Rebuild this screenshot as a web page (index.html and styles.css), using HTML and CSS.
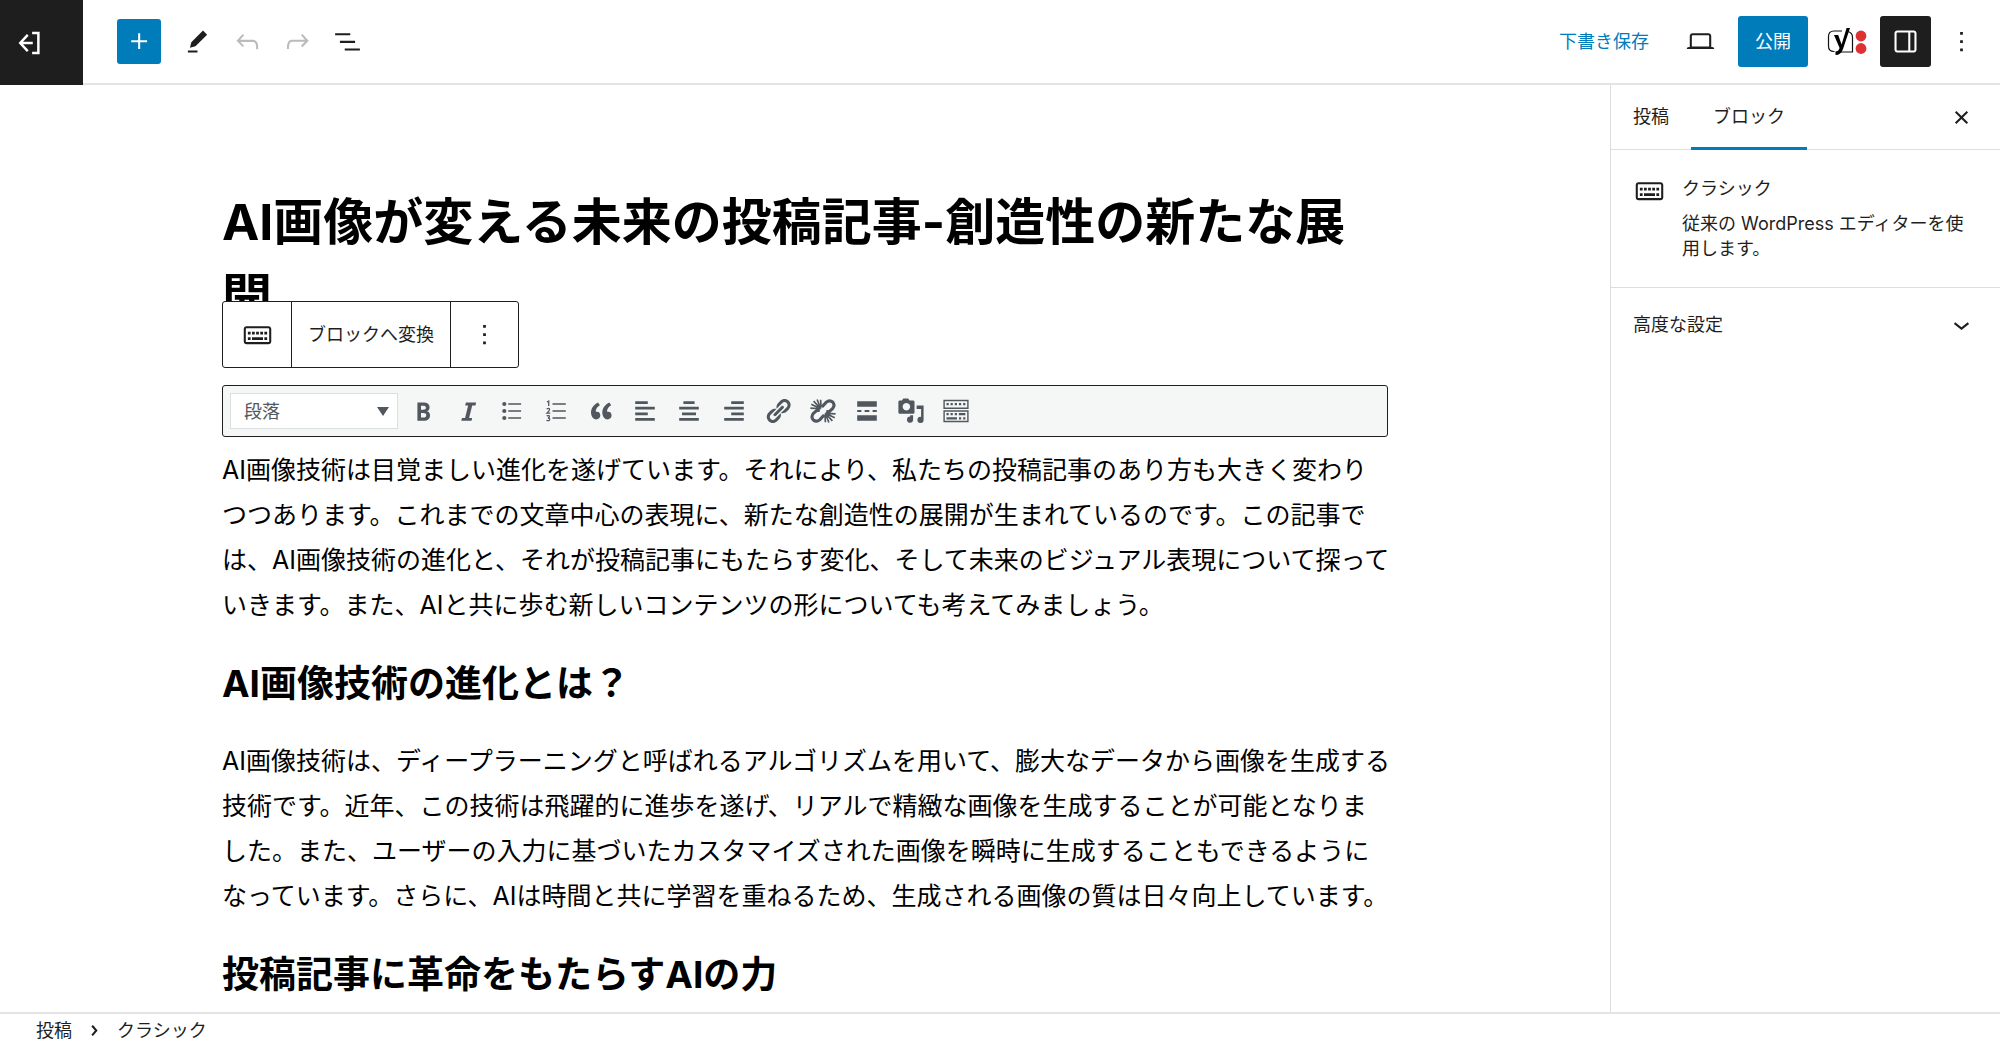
FILE: index.html
```html
<!DOCTYPE html>
<html lang="ja">
<head>
<meta charset="utf-8">
<meta name="viewport" content="width=device-width, initial-scale=1">
<title>投稿を編集</title>
<link rel="stylesheet" href="styles.css">
</head>
<body>
<div class="editor">
  <header class="header">
    <a class="exit" href="#" aria-label="戻る">
      <svg class="icon" viewBox="0 0 24 24" fill="none" stroke="currentColor" stroke-width="2"><path d="M11 5.500 5 12l6 6.500M5.500 12H15M14.500 4h5v16h-5"/></svg>
    </a>
    <div class="header-tools">
      <button class="tool tool-add" type="button" aria-label="ブロック挿入">
        <svg class="icon" viewBox="0 0 24 24"><path d="M11 12.500V17.500H12.500V12.500H17.500V11H12.500V6H11V11H6V12.500Z"/></svg>
      </button>
      <button class="tool" type="button" aria-label="ツール">
        <svg class="icon" viewBox="0 0 24 24"><path d="m19 7-3-3-8.500 8.500-1 4 4-1L19 7Zm-7 11.500H5V20h7v-1.500Z"/></svg>
      </button>
      <button class="tool tool-off" type="button" aria-label="元に戻す">
        <svg class="icon" viewBox="0 0 24 24"><path d="M18.300 11.700c-.6-.6-1.400-.9-2.300-.9H6.700l2.900-3.300-1.100-1-4.500 5L8.500 16l1-1-2.700-2.700H16c.5 0 .9.2 1.300.5 1 1 1 3.400 1 4.500v.3h1.500v-.2c0-1.500 0-4.300-1.500-5.700z"/></svg>
      </button>
      <button class="tool tool-off" type="button" aria-label="やり直す">
        <svg class="icon" viewBox="0 0 24 24"><path d="M15.600 6.500l-1.100 1 2.900 3.300H8c-.9 0-1.700.3-2.300.9-1.400 1.500-1.400 4.200-1.400 5.600v.2h1.500v-.3c0-1.100 0-3.500 1-4.500.3-.3.7-.5 1.300-.5h9.200L14.500 15l1.100 1.100 4.600-4.600-4.600-5z"/></svg>
      </button>
      <button class="tool" type="button" aria-label="ドキュメント概観">
        <svg class="icon" viewBox="0 0 24 24"><path d="M3 6h11v1.500H3V6Zm3.500 5.500h11V13h-11v-1.500ZM21 17H10v1.500h11V17Z"/></svg>
      </button>
    </div>
    <div class="header-settings">
      <button class="save" type="button">下書き保存</button>
      <button class="square" type="button" aria-label="表示">
        <svg class="icon" viewBox="0 0 24 24"><path d="M20.500 16h-.7V8c0-1.100-.9-2-2-2H6.200c-1.100 0-2 .9-2 2v8h-.7c-.8 0-1.500.7-1.500 1.500h20c0-.8-.7-1.500-1.500-1.500zM5.700 8c0-.3.2-.5.5-.5h11.600c.3 0 .5.2.5.5v7.600H5.700V8z"/></svg>
      </button>
      <button class="publish" type="button">公開</button>
      <button class="yoast" type="button" aria-label="Yoast SEO">
        <svg class="yoast-icon" viewBox="0 0 42 30" fill="none">
          <path d="M16 4H8Q2.500 4 2.500 9.500V19Q2.500 24.500 8 24.500H8.500M22 4.500Q26.500 6 26.500 10V25H13.500" stroke="#111" stroke-width="1.200"/>
          <path d="M8 8h4.200l3.400 9.400L20.600 1H24l-7 21Q15 28 9.500 28v-3.400Q12.500 24.500 13.600 21z" fill="#000"/>
          <circle cx="35" cy="9" r="5.400" fill="#dc3232"/><circle cx="35" cy="21.500" r="5.400" fill="#dc3232"/>
        </svg>
      </button>
      <button class="square square-active" type="button" aria-label="設定">
        <svg class="icon" viewBox="0 0 24 24"><path d="M18 4H6c-1.100 0-2 .9-2 2v12c0 1.100.9 2 2 2h12c1.100 0 2-.9 2-2V6c0-1.100-.9-2-2-2zm-4 14.500H6c-.3 0-.5-.2-.5-.5V6c0-.3.2-.5.5-.5h8v13zm4.500-.5c0 .3-.2.5-.5.5h-2.500v-13H18c.3 0 .5.2.5.5v12z"/></svg>
      </button>
      <button class="more" type="button" aria-label="オプション">
        <svg class="icon" viewBox="0 0 24 24"><path d="M13 19h-2v-2h2v2zm0-6h-2v-2h2v2zm0-6h-2V5h2v2z"/></svg>
      </button>
    </div>
  </header>

  <div class="workspace">
    <main class="canvas">
      <article class="post">
        <h1 class="post-title">AI画像が変える未来の投稿記事-創造性の新たな展<br>開</h1>
        <section class="classic">
          <div class="block-toolbar">
            <button class="block-cell block-type" type="button" aria-label="クラシック">
              <svg class="icon" viewBox="0 0 24 24"><path d="M20 6H4c-1.100 0-2 .9-2 2v9c0 1.100.9 2 2 2h16c1.100 0 2-.9 2-2V8c0-1.100-.9-2-2-2zm.5 11c0 .3-.2.5-.5.5H4c-.3 0-.5-.2-.5-.5V8c0-.3.2-.5.5-.5h16c.3 0 .5.2.5.5v9zM10 10H8v2h2v-2zm-5 2h2v-2H5v2zm8-2h-2v2h2v-2zm-5 6h8v-2H8v2zm6-4h2v-2h-2v2zm3 0h2v-2h-2v2zm0 4h2v-2h-2v2zM5 16h2v-2H5v2z"/></svg>
            </button>
            <button class="block-cell block-convert" type="button">ブロックへ変換</button>
            <button class="block-cell block-more" type="button" aria-label="オプション">
              <svg class="icon" viewBox="0 0 24 24"><path d="M13 19h-2v-2h2v2zm0-6h-2v-2h2v2zm0-6h-2V5h2v2z"/></svg>
            </button>
          </div>
          <div class="mce">
            <div class="format">
              <select class="format-select" aria-label="書式"><option>段落</option></select>
            </div>
            <div class="mce-buttons">
              <button class="mce-button" type="button" aria-label="太字"><svg class="mce-icon" viewBox="0 0 20 20"><path d="M6 4v13h4.540c1.370 0 2.460-.33 3.260-1 .8-.66 1.200-1.580 1.200-2.770 0-.84-.17-1.510-.51-2.010s-.9-.85-1.670-1.030v-.09c.57-.1 1.020-.4 1.360-.9s.51-1.130.51-1.910c0-1.140-.39-1.980-1.170-2.500C12.750 4.260 11.500 4 9.780 4H6zm2.570 5.150V6.260h1.360c.73 0 1.270.11 1.610.32.34.22.51.58.51 1.070 0 .54-.16.92-.47 1.150s-.82.35-1.510.35h-1.500zm0 2.190h1.600c1.440 0 2.160.53 2.160 1.610 0 .6-.17 1.050-.51 1.340s-.86.43-1.570.43H8.570v-3.380z"/></svg></button>
              <button class="mce-button" type="button" aria-label="斜体"><svg class="mce-icon" viewBox="0 0 20 20"><path d="M15.800 4l-.5 2H13l-2.200 9h2.200l-.5 2H5.200l.5-2h2.200l2.200-9H8l.5-2z"/></svg></button>
              <button class="mce-button" type="button" aria-label="箇条書き"><svg class="mce-icon" viewBox="0 0 20 20"><circle cx="4.500" cy="5" r="1.500"/><circle cx="4.500" cy="10" r="1.500"/><circle cx="4.500" cy="15" r="1.500"/><path d="M7.300 4.500H16.500v1H7.300zM7.300 9.500H16.500v1H7.300zM7.300 14.500H16.500v1H7.300z"/></svg></button>
              <button class="mce-button" type="button" aria-label="番号付きリスト"><svg class="mce-icon" viewBox="0 0 20 20"><path d="M7.500 4.500H17v1H7.500zM7.500 9.500H17v1H7.500zM7.500 14.500H17v1H7.500z"/><path d="M3.600 3.600 4.800 2.900V6.400M3.300 8.600Q5.400 7.600 5.400 9 5.400 9.800 3.500 11.500H5.900M3.300 13.500Q5.400 12.900 5.300 14 5.200 14.900 4.200 15 5.600 15.100 5.500 16.200 5.200 17.300 3.200 16.700" fill="none" stroke="currentColor" stroke-width=".9"/></svg></button>
              <button class="mce-button" type="button" aria-label="引用"><svg class="mce-icon" viewBox="0 0 20 20"><path d="M9.490 13.220c0-.74-.2-1.380-.61-1.900-.62-.78-1.830-.88-2.530-.72-.29-1.650 1.110-3.750 2.920-4.650L7.880 4c-2.730 1.300-5.420 4.280-4.960 8.050C3.210 14.430 4.590 16 6.540 16c.85 0 1.560-.25 2.120-.75s.83-1.180.83-2.030zm8.050 0c0-.74-.2-1.380-.61-1.900-.63-.78-1.830-.88-2.530-.72-.29-1.650 1.110-3.750 2.920-4.650L15.930 4c-2.730 1.300-5.410 4.280-4.950 8.050.29 2.380 1.660 3.950 3.610 3.950.85 0 1.560-.25 2.120-.75s.83-1.180.83-2.030z"/></svg></button>
              <button class="mce-button" type="button" aria-label="左寄せ"><svg class="mce-icon" viewBox="0 0 20 20"><path d="M3 3h9v2H3zM3 7h14v2H3zM3 11h9v2H3zM3 15h14v2H3z"/></svg></button>
              <button class="mce-button" type="button" aria-label="中央揃え"><svg class="mce-icon" viewBox="0 0 20 20"><path d="M6 3h8v2H6zM3 7h14v2H3zM5 11h10v2H5zM3 15h14v2H3z"/></svg></button>
              <button class="mce-button" type="button" aria-label="右寄せ"><svg class="mce-icon" viewBox="0 0 20 20"><path d="M8 3h9v2H8zM3 7h14v2H3zM8 11h9v2H8zM3 15h14v2H3z"/></svg></button>
              <button class="mce-button" type="button" aria-label="リンク"><svg class="mce-icon" viewBox="0 0 20 20"><path d="M17.740 2.760c1.680 1.690 1.680 4.410 0 6.100l-1.530 1.520c-1.120 1.120-2.700 1.470-4.140 1.090l2.620-2.610.76-.77.76-.76c.84-.84.84-2.200 0-3.040-.84-.85-2.200-.85-3.040 0l-.77.76-3.380 3.380c-.37-1.440-.02-3.020 1.100-4.140l1.520-1.530c1.690-1.680 4.420-1.680 6.100 0zM8.590 13.430l5.340-5.340c.42-.42.42-1.100 0-1.520-.44-.43-1.130-.39-1.530 0l-5.330 5.340c-.42.42-.42 1.100 0 1.520.44.43 1.130.39 1.520 0zm-.76 2.290l4.140-4.150c.38 1.440.03 3.020-1.090 4.140l-1.520 1.530c-1.690 1.680-4.410 1.680-6.100 0-1.680-1.680-1.680-4.420 0-6.100l1.530-1.520c1.120-1.120 2.700-1.470 4.140-1.100l-4.140 4.150c-.85.84-.85 2.200 0 3.050.84.84 2.200.84 3.040 0z"/></svg></button>
              <button class="mce-button" type="button" aria-label="リンクの削除"><svg class="mce-icon" viewBox="0 0 20 20" fill="none" stroke="currentColor"><path d="M9.200 7.200 12.200 3.900Q14.600 1.700 16.900 3.600 18.900 6 16.800 8.400L14.400 10.500 12.300 10.300M10.800 12.800 7.800 16.100Q5.400 18.300 3.100 16.400 1.100 14 3.200 11.600L5.600 9.500 7.700 9.700" stroke-width="2.200"/><path d="M8.400 8.400 1.600 5.200M8.400 8.400 3.300 3M8.400 8.400 5.800 1.800M8.400 8.400 1 7.900M8.600 7.500 8.300 2M11.600 11.600 18.400 14.800M11.600 11.600 16.700 17M11.600 11.600 14.200 18.200M11.600 11.600 19 12.100M11.400 12.500 11.700 18" stroke-width="1.200"/></svg></button>
              <button class="mce-button" type="button" aria-label="続きを読む"><svg class="mce-icon" viewBox="0 0 20 20"><path d="M3 3h14v4H3zM3 9.200h3v1.500H3zM8.300 9.200h3.400v1.500H8.300zM14 9.200h3v1.500h-3zM3 13h14v4H3z"/></svg></button>
              <button class="mce-button" type="button" aria-label="メディアを追加"><svg class="mce-icon" viewBox="0 0 20 20"><path fill-rule="evenodd" d="M2 2.500h1.500L4.500 1H8l1 1.500h2.500q1 0 1 1V11q0 1-1 1H2q-1 0-1-1V3.500q0-1 1-1zM6.700 4.200a2.700 2.700 0 1 0 .01 0z"/><path d="M14 6h5v10.300a2.200 2.200 0 1 1-1.800-2.100V8.500H14zM9.400 13h2.100v3.600a2.200 2.200 0 1 1-2.100-2.600z"/></svg></button>
              <button class="mce-button" type="button" aria-label="ツールバー切り替え"><svg class="mce-icon" viewBox="0 0 20 20"><path fill-rule="evenodd" d="M1 2h18v6.500H1zM2 3v4.500h16V3zM1 9.500h18V18H1zM2 10.500V17h16v-6.500z"/><path d="M3.200 4.300h1.600v1.600H3.200zM6.100 4.300h1.600v1.600H6.100zM9.100 4.300h1.600v1.600H9.100zM12.100 4.300h1.600v1.600h-1.600zM15.100 4.300h1.600v1.600h-1.600zM3.200 11.500h1.600v1.600H3.200zM6.100 11.500h1.600v1.600H6.100zM9.100 11.500h1.600v1.600H9.100zM12 11.500h4.700v1.600H12zM3.200 14.400h7.500V16H3.200zM12.100 14.400h1.600V16h-1.600zM15.100 14.400h1.600V16h-1.600z"/></svg></button>
            </div>
          </div>
          <div class="content">
            <p>AI画像技術は目覚ましい進化を遂げています。それにより、私たちの投稿記事のあり方も大きく変わり<br>つつあります。これまでの文章中心の表現に、新たな創造性の展開が生まれているのです。この記事で<br>は、AI画像技術の進化と、それが投稿記事にもたらす変化、そして未来のビジュアル表現について探って<br>いきます。また、AIと共に歩む新しいコンテンツの形についても考えてみましょう。</p>
            <h2>AI画像技術の進化とは？</h2>
            <p>AI画像技術は、ディープラーニングと呼ばれるアルゴリズムを用いて、膨大なデータから画像を生成する<br>技術です。近年、この技術は飛躍的に進歩を遂げ、リアルで精緻な画像を生成することが可能となりま<br>した。また、ユーザーの入力に基づいたカスタマイズされた画像を瞬時に生成することもできるように<br>なっています。さらに、AIは時間と共に学習を重ねるため、生成される画像の質は日々向上しています。</p>
            <h2>投稿記事に革命をもたらすAIの力</h2>
          </div>
        </section>
      </article>
    </main>

    <aside class="sidebar">
      <div class="tabs">
        <button class="tab" type="button">投稿</button>
        <button class="tab tab-active" type="button">ブロック</button>
        <button class="more tabs-close" type="button" aria-label="閉じる">
          <svg class="icon" viewBox="0 0 24 24"><path d="M12 13.060l3.712 3.713 1.061-1.060L13.061 12l3.712-3.712-1.060-1.060L12 10.938 8.288 7.227l-1.061 1.060L10.939 12l-3.712 3.712 1.060 1.061L12 13.061z"/></svg>
        </button>
      </div>
      <div class="card">
        <svg class="icon" viewBox="0 0 24 24"><path d="M20 6H4c-1.100 0-2 .9-2 2v9c0 1.100.9 2 2 2h16c1.100 0 2-.9 2-2V8c0-1.100-.9-2-2-2zm.5 11c0 .3-.2.5-.5.5H4c-.3 0-.5-.2-.5-.5V8c0-.3.2-.5.5-.5h16c.3 0 .5.2.5.5v9zM10 10H8v2h2v-2zm-5 2h2v-2H5v2zm8-2h-2v2h2v-2zm-5 6h8v-2H8v2zm6-4h2v-2h-2v2zm3 0h2v-2h-2v2zm0 4h2v-2h-2v2zM5 16h2v-2H5v2z"/></svg>
        <div class="card-text">
          <h2 class="card-title">クラシック</h2>
          <p class="card-description">従来の WordPress エディターを使用します。</p>
        </div>
      </div>
      <button class="panel" type="button">高度な設定
        <svg class="icon" viewBox="0 0 24 24"><path d="M17.500 11.600L12 16l-5.500-4.400.9-1.200L12 14l4.500-3.600 1 1.200z"/></svg>
      </button>
    </aside>
  </div>

  <footer class="footer">
    <a class="crumb" href="#">投稿</a>
    <svg class="icon" viewBox="0 0 24 24"><path d="M10.862 8.040L14.280 12.029L10.862 16.017L9.723 15.040L12.305 12.029L9.723 9.017Z"/></svg>
    <span class="crumb">クラシック</span>
  </footer>
</div>
</body>
</html>
```
FILE: styles.css
```css
* {
  box-sizing: border-box;
}

body {
  margin: 0;
  background: #fff;
  color: #1e1e1e;
  font: 18px/25px Inter, "Noto Sans CJK JP", sans-serif;
}

button,
select {
  margin: 0;
  padding: 0;
  border: 0;
  border-radius: 0;
  background: none;
  color: inherit;
  font: inherit;
}

button {
  display: flex;
  align-items: center;
  justify-content: center;
  white-space: nowrap;
}

a {
  color: inherit;
  text-decoration: none;
}

svg {
  display: block;
  flex: none;
}

svg:not([fill]) {
  fill: currentColor;
}

.icon {
  width: 33px;
  height: 33px;
}

.editor {
  display: flex;
  flex-direction: column;
  height: 100vh;
  overflow: hidden;
}

/* Header */

.header {
  display: flex;
  flex: none;
  height: 85px;
  border-bottom: 2px solid #e4e4e4;
}

.exit {
  display: flex;
  align-items: center;
  width: 83px;
  height: 85px;
  padding-left: 14px;
  background: #1e1e1e;
  color: #fff;
}

.exit .icon {
  width: 30px;
  height: 30px;
}

.header-tools {
  display: flex;
  align-items: center;
  gap: 6px;
  padding-left: 34px;
}

.tool {
  width: 44px;
  height: 45px;
}

.tool-add {
  margin-right: 8px;
  border-radius: 3px;
  background: #007cba;
  color: #fff;
}

.tool-off {
  color: #bbb;
}

.header-settings {
  display: flex;
  align-items: center;
  margin-left: auto;
  padding-right: 17px;
}

.save {
  color: #007cba;
}

.square {
  width: 51px;
  height: 51px;
  margin-left: 26px;
  border-radius: 3px;
}

.publish {
  height: 51px;
  margin-left: 12px;
  padding: 0 17px;
  border-radius: 3px;
  background: #007cba;
  color: #fff;
}

.yoast {
  height: 51px;
  margin-left: 18px;
}

.yoast-icon {
  width: 42px;
  height: 30px;
}

.square-active {
  margin-left: 12px;
  background: #1e1e1e;
  color: #fff;
}

.more {
  width: 44px;
  height: 51px;
  margin-left: 8px;
}

/* Workspace */

.workspace {
  display: flex;
  flex: 1;
  min-height: 0;
}

.canvas {
  flex: 1;
  min-width: 0;
  padding: 100px 24px 0;
  overflow: hidden;
  color: #000;
}

.post {
  max-width: 1166px;
  margin: 0 auto;
}

.post-title {
  margin: 0 0 50px;
  font-size: 50px;
  font-weight: 700;
  line-height: 75px;
  white-space: nowrap;
}

.classic {
  position: relative;
}

.block-toolbar {
  position: absolute;
  bottom: calc(100% + 17px);
  left: 0;
  display: flex;
  height: 67px;
  border: 1px solid #1e1e1e;
  border-radius: 3px;
  background: #fff;
  color: #1e1e1e;
}

.block-cell + .block-cell {
  border-left: 1px solid #1e1e1e;
}

.block-type,
.block-more {
  width: 68px;
}

.block-convert {
  padding: 0 16px;
}

.mce {
  display: flex;
  align-items: center;
  gap: 3px;
  height: 52px;
  padding: 0 7px;
  border: 1px solid #1e1e1e;
  border-radius: 3px;
  background: #f5f7f7;
  color: #50575e;
}

.format {
  position: relative;
  width: 168px;
}

.format::after {
  content: "";
  position: absolute;
  top: 14px;
  right: 9px;
  border: 6px solid transparent;
  border-top: 9px solid currentColor;
  border-bottom: 0;
  pointer-events: none;
}

.format-select {
  width: 100%;
  height: 36px;
  padding: 0 13px;
  border: 1px solid #dcdfdf;
  background: #fff;
  appearance: none;
}

.mce-buttons {
  display: grid;
  flex: 0 1 577px;
  grid-template-columns: repeat(13, 1fr);
}

.mce-button {
  height: 36px;
}

.mce-icon {
  width: 28px;
  height: 28px;
}

.content {
  padding-top: 11px;
  font-size: 25px;
  line-height: 45px;
  white-space: nowrap;
}

.content p {
  margin: 0;
}

.content h2 {
  margin: 33px 0;
  font-size: 37px;
  font-weight: 700;
  line-height: 45px;
}

/* Sidebar */

.sidebar {
  flex: none;
  width: 390px;
  border-left: 1px solid #ddd;
}

.tabs {
  display: flex;
  height: 65px;
  padding-right: 17px;
  border-bottom: 1px solid #ddd;
}

.tab {
  height: 65px;
  padding: 0 22px;
  border-bottom: 3px solid transparent;
}

.tab-active {
  border-color: #007cba;
}

.tabs-close {
  height: 65px;
  margin-left: auto;
}

.card {
  display: flex;
  gap: 16px;
  padding: 24px 32px 26px 22px;
  border-bottom: 1px solid #ddd;
}

.card-text {
  padding-top: 2px;
}

.card-title {
  margin: 0 0 10px;
  font-size: 18px;
  font-weight: 400;
  line-height: 25px;
}

.card-description {
  margin: 0;
}

.panel {
  justify-content: space-between;
  width: 100%;
  height: 73px;
  padding: 0 22px;
}

/* Footer */

.footer {
  display: flex;
  flex: none;
  align-items: center;
  gap: 6px;
  height: 35px;
  padding: 0 36px;
  border-top: 2px solid #e4e4e4;
}
```
